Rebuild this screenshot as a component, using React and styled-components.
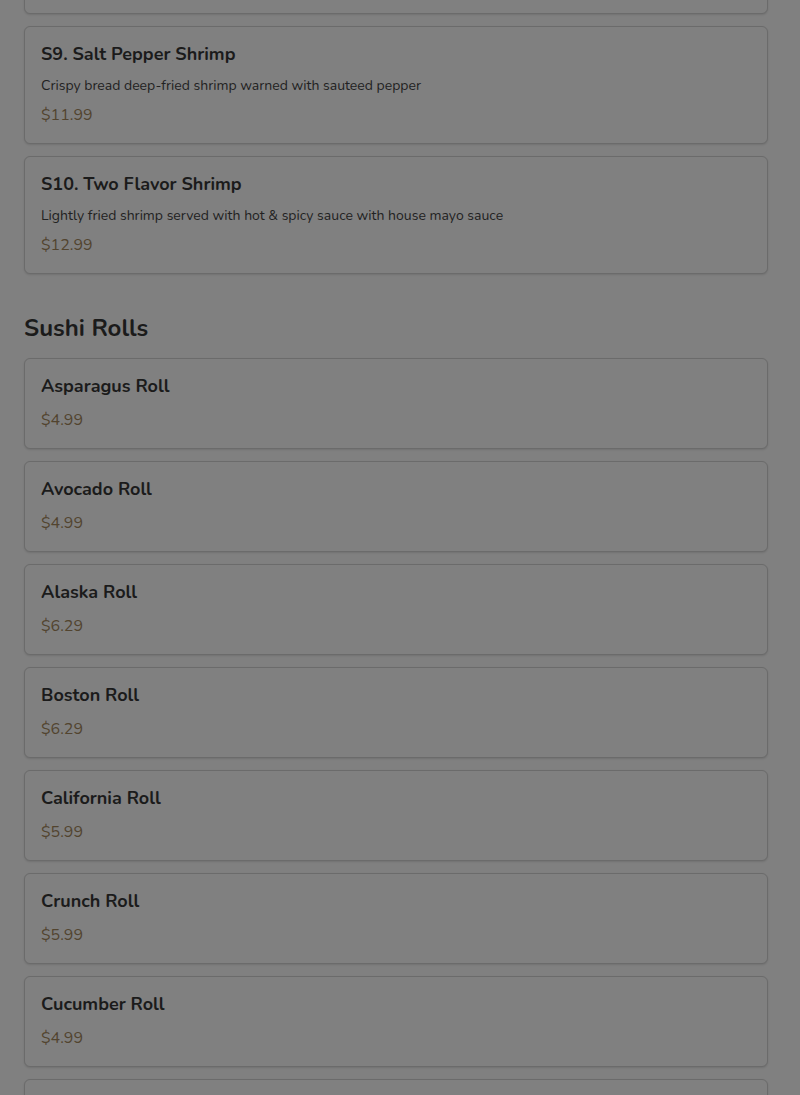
import React from "react";
import styled, { createGlobalStyle } from "styled-components";

const Global = createGlobalStyle`
  html, body { margin: 0; padding: 0; background: #808080; }
  body { font-family: "Nunito", "Lato", "Noto Sans", sans-serif; }
  * { box-sizing: border-box; }
`;

const Page = styled.main`
  padding: 0 32px 0 24px;
  margin-top: -104px;
  display: flex;
  flex-direction: column;
`;

const Section = styled.section`
  display: flex;
  flex-direction: column;
  margin-top: ${(p) => (p.$first ? "0" : "39px")};
`;

const SectionTitle = styled.h2`
  margin: 0 0 15px;
  font-size: 24px;
  line-height: 30px;
  font-weight: 700;
  color: #1b1b1b;
`;

const List = styled.div`
  display: flex;
  flex-direction: column;
  gap: 12px;
`;

const Card = styled.article`
  border: 1px solid #6b6b6b;
  border-radius: 6px;
  padding: 16px;
  background: #808080;
  box-shadow: 0 1px 2px rgba(0, 0, 0, 0.12);
  display: flex;
  flex-direction: column;
`;

const ItemName = styled.h3`
  margin: 0 0 10px;
  font-size: 18px;
  line-height: 23px;
  font-weight: 700;
  color: #1b1b1b;
`;

const ItemDesc = styled.p`
  margin: 0 0 7px;
  font-size: 14px;
  line-height: 20px;
  color: #222222;
`;

const Price = styled.span`
  font-size: 16px;
  line-height: 24px;
  color: #52442f;
`;

const shrimp = [
  { name: "S8. Kung Pao Shrimp", desc: "Shrimp with peanuts and vegetables in spicy sauce", price: "$11.99" },
  { name: "S9. Salt Pepper Shrimp", desc: "Crispy bread deep-fried shrimp warned with sauteed pepper", price: "$11.99" },
  { name: "S10. Two Flavor Shrimp", desc: "Lightly fried shrimp served with hot & spicy sauce with house mayo sauce", price: "$12.99" },
];

const rolls = [
  { name: "Asparagus Roll", price: "$4.99" },
  { name: "Avocado Roll", price: "$4.99" },
  { name: "Alaska Roll", price: "$6.29" },
  { name: "Boston Roll", price: "$6.29" },
  { name: "California Roll", price: "$5.99" },
  { name: "Crunch Roll", price: "$5.99" },
  { name: "Cucumber Roll", price: "$4.99" },
  { name: "Dragon Roll", price: "$9.99" },
];

function Item({ item }) {
  return (
    <Card>
      <ItemName>{item.name}</ItemName>
      {item.desc && <ItemDesc>{item.desc}</ItemDesc>}
      <Price>{item.price}</Price>
    </Card>
  );
}

export default function App() {
  return (
    <>
      <Global />
      <Page>
        <Section $first>
          <List>
            {shrimp.map((it) => (
              <Item key={it.name} item={it} />
            ))}
          </List>
        </Section>
        <Section>
          <SectionTitle>Sushi Rolls</SectionTitle>
          <List>
            {rolls.map((it) => (
              <Item key={it.name} item={it} />
            ))}
          </List>
        </Section>
      </Page>
    </>
  );
}
